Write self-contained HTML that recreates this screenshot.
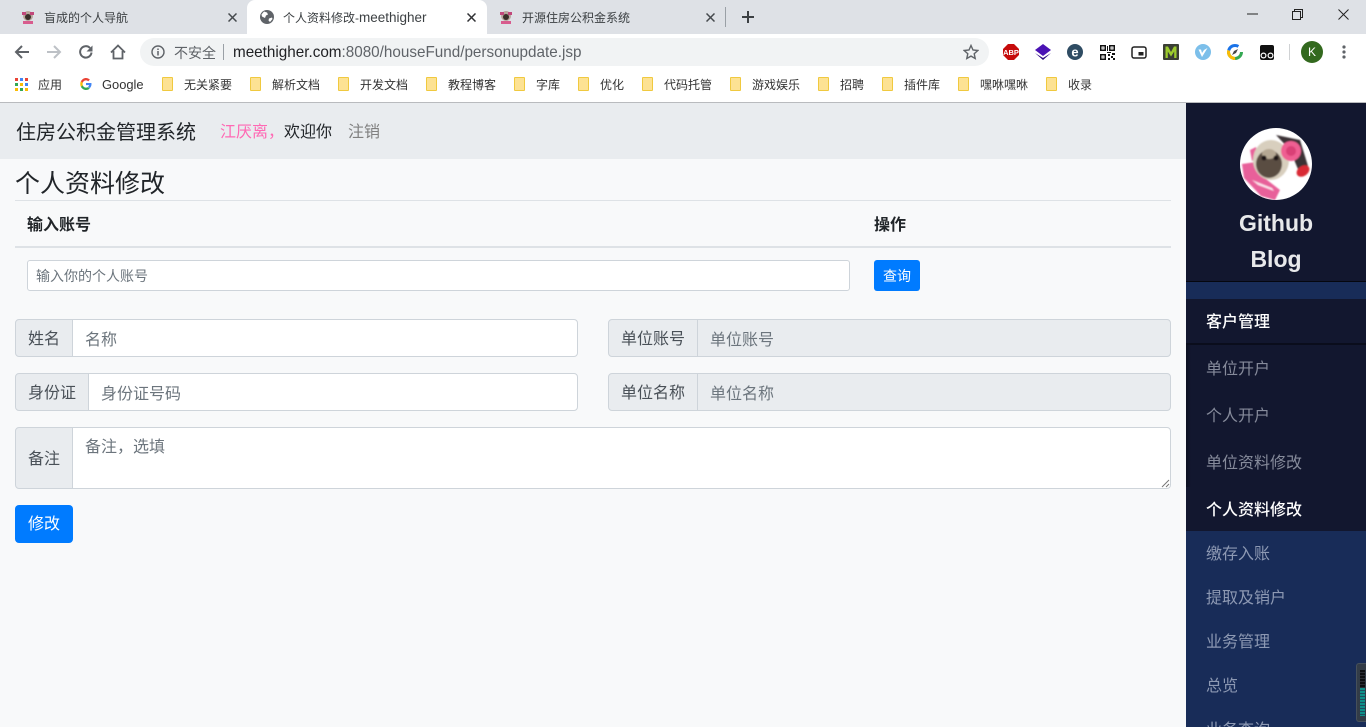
<!DOCTYPE html>
<html lang="zh"><head><meta charset="utf-8"><title>个人资料修改-meethigher</title>
<style>
*{box-sizing:border-box}
html,body{margin:0;padding:0;width:1366px;height:727px;overflow:hidden;background:#f8f9fa;font-family:"Liberation Sans","Noto Sans CJK SC",sans-serif}
#root{position:relative;width:1366px;height:727px;overflow:hidden}
.a{position:absolute}
.t{position:absolute;white-space:nowrap}
.tab{font-size:12px;line-height:18px;top:9px;color:#3c4043}
.bm{font-size:12px;line-height:16px;top:77px;color:#333}
.fo{position:absolute;top:77px;width:11px;height:14px;background:#fde293;border:1px solid #f0c93f;border-radius:1px}
.box{position:absolute;border:1px solid #ced4da;background:#fff;border-radius:4px}
.ad{position:absolute;background:#e9ecef;border:1px solid #ced4da;border-radius:4px 0 0 4px;color:#495057;font-size:16px;text-align:center}
.ph{position:absolute;color:#6c757d;font-size:16px;line-height:24px;white-space:nowrap}
.nav{position:absolute;left:1206px;font-size:16px;line-height:24px;white-space:nowrap}
</style></head><body><div id="root">

<!-- browser chrome -->
<div class="a" style="left:0;top:0;width:1366px;height:34px;background:#dee1e6"></div>
<div class="a" style="left:247px;top:0;width:240px;height:34px;background:#fff;border-radius:8px 8px 0 0"></div>
<div class="a" style="left:0;top:34px;width:1366px;height:69px;background:#fff"></div>
<div class="a" style="left:0;top:102px;width:1366px;height:1px;background:#b9bbbe"></div>

<svg class="a" style="left:20px;top:9px" width="16" height="16" viewBox="0 0 16 16"><circle cx="8" cy="7" r="5" fill="#b8a49a"/><path d="M2 3h4v3H2zM10 3h4v3h-4z" fill="#c2477b"/><circle cx="8" cy="8" r="3" fill="#3a2f2a"/><path d="M3 12h10v3H3z" fill="#d85c8e"/></svg>
<div class="t tab" style="left:44px">盲成的个人导航</div>
<svg class="a" style="left:228px;top:13px" width="9" height="9"><path d="M.5.5l8 8M8.500.5l-8 8" stroke="#45494d" stroke-width="1.500"/></svg>
<svg class="a" style="left:260px;top:10px" width="14" height="14" viewBox="0 0 14 14"><circle cx="7" cy="7" r="7" fill="#5f6368"/><path d="M4 1.500l3 1 1 2-2 1-1 2.500-3-1.500-.5-2zM9 8.500l3-1 .5 1.500-2.500 3-1.500-1.500z" fill="#fff"/></svg>
<div class="t tab" style="left:283px">个人资料修改-<span style="font-size:13.500px">meethigher</span></div>
<svg class="a" style="left:467px;top:13px" width="9" height="9"><path d="M.5.5l8 8M8.500.5l-8 8" stroke="#303134" stroke-width="1.500"/></svg>
<svg class="a" style="left:498px;top:9px" width="16" height="16" viewBox="0 0 16 16"><circle cx="8" cy="7" r="5" fill="#b8a49a"/><path d="M2 3h4v3H2zM10 3h4v3h-4z" fill="#c2477b"/><circle cx="8" cy="8" r="3" fill="#3a2f2a"/><path d="M3 12h10v3H3z" fill="#d85c8e"/></svg>
<div class="t tab" style="left:522px">开源住房公积金系统</div>
<svg class="a" style="left:706px;top:13px" width="9" height="9"><path d="M.5.5l8 8M8.500.5l-8 8" stroke="#45494d" stroke-width="1.500"/></svg>
<div class="a" style="left:725px;top:7px;width:1px;height:20px;background:#9aa0a6"></div>
<svg class="a" style="left:742px;top:11px" width="12" height="12"><path d="M6 0v12M0 6h12" stroke="#3c4043" stroke-width="2"/></svg>

<svg class="a" style="left:1247px;top:13px" width="11" height="2"><path d="M0 1h11" stroke="#222" stroke-width="1"/></svg>
<svg class="a" style="left:1292px;top:9px" width="11" height="11"><path d="M.5 2.500h8v8h-8zM2.500 2.500v-2h8v8h-2" fill="none" stroke="#222"/></svg>
<svg class="a" style="left:1338px;top:9px" width="11" height="11"><path d="M.5.5l10 10M10.500.5l-10 10" stroke="#222"/></svg>

<!-- toolbar -->
<svg class="a" style="left:14px;top:44px" width="16" height="16"><path d="M15 8H2M8 2L2 8l6 6" fill="none" stroke="#5f6368" stroke-width="2"/></svg>
<svg class="a" style="left:46px;top:44px" width="16" height="16"><path d="M1 8h13M8 2l6 6-6 6" fill="none" stroke="#bdc1c6" stroke-width="2"/></svg>
<svg class="a" style="left:78px;top:44px" width="16" height="16"><path d="M13.500 8.500A5.700 5.700 0 1 1 12 4" fill="none" stroke="#5f6368" stroke-width="2"/><path d="M14.500 1.500v6h-6z" fill="#5f6368"/></svg>
<svg class="a" style="left:110px;top:44px" width="16" height="16"><path d="M1 8.500L8 1.500l7 7M3.500 7v7.500h9V7" fill="none" stroke="#5f6368" stroke-width="1.800"/></svg>
<div class="a" style="left:140px;top:38px;width:849px;height:28px;border-radius:14px;background:#f1f3f4"></div>
<svg class="a" style="left:151px;top:45px" width="14" height="14"><circle cx="7" cy="7" r="6" fill="none" stroke="#5f6368" stroke-width="1.400"/><path d="M7 6v4.500M7 3.500v1.500" stroke="#5f6368" stroke-width="1.500"/></svg>
<div class="t" style="left:174px;top:44px;font-size:14px;line-height:18px;color:#5f6368">不安全</div>
<div class="a" style="left:223px;top:44px;width:1px;height:16px;background:#9aa0a6"></div>
<div class="t" style="left:233px;top:44px;font-size:15.250px;line-height:18px;color:#202124">meethigher.com<span style="color:#5f6368">:8080/houseFund/personupdate.jsp</span></div>
<svg class="a" style="left:963px;top:44px" width="16" height="16" viewBox="0 0 16 16"><path d="M8 1.500l2 4.500 4.800.5-3.600 3.200 1 4.800L8 12.100l-4.200 2.400 1-4.800L1.200 6.500 6 6z" fill="none" stroke="#5f6368" stroke-width="1.400"/></svg>

<!-- extensions -->
<svg class="a" style="left:1003px;top:44px" width="16" height="16"><path d="M5 0h6l5 5v6l-5 5H5l-5-5V5z" fill="#c60b0b"/><text x="8" y="11" font-size="7.500" font-weight="700" fill="#fff" text-anchor="middle" font-family="Liberation Sans">ABP</text></svg>
<svg class="a" style="left:1035px;top:44px" width="16" height="16"><path d="M8 0l8 6-8 6-8-6z" fill="#4a12b4"/><path d="M0 9l8 7 8-7-8 5z" fill="#2c0a80"/></svg>
<svg class="a" style="left:1067px;top:44px" width="16" height="16"><circle cx="8" cy="8" r="8" fill="#2f4c63"/><text x="8" y="12.500" font-size="13" font-weight="700" fill="#fff" text-anchor="middle" font-family="Liberation Sans">e</text></svg>
<svg class="a" style="left:1100px;top:45px" width="15" height="15"><path d="M0 0h6v6H0zM1.500 1.500v3h3v-3zM9 0h6v6H9zM10.500 1.500v3h3v-3zM0 9h6v6H0zM1.500 10.500v3h3v-3z" fill="#111" fill-rule="evenodd"/><path d="M2.500 2.500h1v1h-1zM11.500 2.500h1v1h-1zM2.500 11.500h1v1h-1zM7 1h1v5H7zM7 7h4v1H7zM12 8h3v2h-3zM8 9h2v2H8zM11 11h2v2h-2zM8 13h2v2H8zM13 13h2v2h-2z" fill="#111"/></svg>
<svg class="a" style="left:1131px;top:46px" width="16" height="13"><rect x="1" y="1" width="14" height="11" rx="2" fill="#fff" stroke="#222" stroke-width="1.500"/><rect x="7.500" y="6" width="5" height="3.500" fill="#222"/></svg>
<svg class="a" style="left:1163px;top:44px" width="16" height="16"><rect width="16" height="16" rx="1" fill="#3b3f35"/><path d="M2.500 14V2.500h2.500L8 8l3-5.500h2.500V14h-2.300V7.500L8 12.500 4.800 7.500V14z" fill="#9ccb2d"/></svg>
<svg class="a" style="left:1195px;top:44px" width="16" height="16"><circle cx="8" cy="8" r="8" fill="#7cbfea"/><path d="M3.500 5.500L7 13l5.500-9-3.500 2-2 3-1-3.500z" fill="#fff"/></svg>
<svg class="a" style="left:1227px;top:44px" width="16" height="16"><circle cx="8" cy="8" r="6.500" fill="#fff" stroke="#34a853" stroke-width="3" stroke-dasharray="20 21"/><circle cx="8" cy="8" r="6.500" fill="none" stroke="#fbbc05" stroke-width="3" stroke-dasharray="12 29" stroke-dashoffset="-10"/><circle cx="8" cy="8" r="6.500" fill="none" stroke="#1a73e8" stroke-width="3" stroke-dasharray="12 29" stroke-dashoffset="-22"/><path d="M5 11l2-4 4-2-2 4z" fill="#444"/></svg>
<svg class="a" style="left:1259px;top:45px" width="16" height="15"><path d="M3 0h10a2 2 0 0 1 2 2v11a2 2 0 0 1-2 2H3a2 2 0 0 1-2-2V2a2 2 0 0 1 2-2z" fill="#111"/><circle cx="4.500" cy="10.500" r="3" fill="#fff"/><circle cx="11.500" cy="10.500" r="3" fill="#fff"/><circle cx="4.500" cy="10.500" r="1.800" fill="#111"/><circle cx="11.500" cy="10.500" r="1.800" fill="#111"/></svg>
<div class="a" style="left:1289px;top:44px;width:1px;height:16px;background:#d0d2d4"></div>
<div class="a" style="left:1301px;top:41px;width:22px;height:22px;border-radius:50%;background:#33691e;color:#fff;font-size:12px;line-height:22px;text-align:center">K</div>
<svg class="a" style="left:1342px;top:45px" width="4" height="14"><circle cx="2" cy="2" r="1.600" fill="#5f6368"/><circle cx="2" cy="7" r="1.600" fill="#5f6368"/><circle cx="2" cy="12" r="1.600" fill="#5f6368"/></svg>

<!-- bookmarks -->
<svg class="a" style="left:15px;top:78px" width="13" height="13"><g><rect width="3" height="3" fill="#ea4335"/><rect x="5" width="3" height="3" fill="#4285f4"/><rect x="10" width="3" height="3" fill="#ea4335"/><rect y="5" width="3" height="3" fill="#34a853"/><rect x="5" y="5" width="3" height="3" fill="#fbbc05"/><rect x="10" y="5" width="3" height="3" fill="#4285f4"/><rect y="10" width="3" height="3" fill="#fbbc05"/><rect x="5" y="10" width="3" height="3" fill="#34a853"/><rect x="10" y="10" width="3" height="3" fill="#fbbc05"/></g></svg>
<div class="t bm" style="left:38px">应用</div>
<svg class="a" style="left:80px;top:78px" width="12" height="12" viewBox="0 0 24 24"><path d="M23 12.300c0-.9-.1-1.600-.2-2.300H12v4.300h6.200c-.3 1.400-1 2.500-2.300 3.300l3.600 2.800c2.100-2 3.500-4.800 3.500-8.100z" fill="#4285f4"/><path d="M12 24c3.200 0 5.900-1.100 7.500-3l-3.600-2.800c-1 .7-2.300 1.100-3.900 1.100-3 0-5.600-2-6.500-4.800l-3.800 2.900C4 21.300 7.700 24 12 24z" fill="#34a853"/><path d="M5.500 14.500c-.5-1.500-.5-3.500 0-5L1.700 6.600c-1.600 3.200-1.600 7.600 0 10.800z" fill="#fbbc05"/><path d="M12 4.700c1.800 0 3.300.6 4.500 1.800l3.200-3.200C17.800 1.300 15.100 0 12 0 7.700 0 4 2.700 1.700 6.600l3.800 2.900C6.400 6.700 9 4.700 12 4.700z" fill="#ea4335"/></svg>
<div class="t bm" style="left:102px;font-size:12.900px">Google</div>
<div class="fo" style="left:162px"></div><div class="t bm" style="left:184px">无关紧要</div>
<div class="fo" style="left:250px"></div><div class="t bm" style="left:272px">解析文档</div>
<div class="fo" style="left:338px"></div><div class="t bm" style="left:360px">开发文档</div>
<div class="fo" style="left:426px"></div><div class="t bm" style="left:448px">教程博客</div>
<div class="fo" style="left:514px"></div><div class="t bm" style="left:536px">字库</div>
<div class="fo" style="left:578px"></div><div class="t bm" style="left:600px">优化</div>
<div class="fo" style="left:642px"></div><div class="t bm" style="left:664px">代码托管</div>
<div class="fo" style="left:730px"></div><div class="t bm" style="left:752px">游戏娱乐</div>
<div class="fo" style="left:818px"></div><div class="t bm" style="left:840px">招聘</div>
<div class="fo" style="left:882px"></div><div class="t bm" style="left:904px">插件库</div>
<div class="fo" style="left:958px"></div><div class="t bm" style="left:980px">嘿咻嘿咻</div>
<div class="fo" style="left:1046px"></div><div class="t bm" style="left:1068px">收录</div>

<!-- page header -->
<div class="a" style="left:0;top:103px;width:1186px;height:56px;background:#e9ecef"></div>
<div class="t" style="left:16px;top:119px;font-size:20px;line-height:28px;color:#212529">住房公积金管理系统</div>
<div class="t" style="left:220px;top:121px;font-size:16px;line-height:24px;color:#ff69b4">江厌离&#65292;</div>
<div class="t" style="left:284px;top:121px;font-size:16px;line-height:24px;color:#212529">欢迎你</div>
<div class="t" style="left:348px;top:121px;font-size:16px;line-height:24px;color:#808080">注销</div>

<div class="t" style="left:15px;top:168px;font-size:25px;line-height:32px;color:#212529">个人资料修改</div>

<!-- table -->
<div class="a" style="left:15px;top:200px;width:1156px;height:1px;background:#dee2e6"></div>
<div class="t" style="left:27px;top:214px;font-size:16px;line-height:24px;font-weight:700;color:#212529">输入账号</div>
<div class="t" style="left:874px;top:214px;font-size:16px;line-height:24px;font-weight:700;color:#212529">操作</div>
<div class="a" style="left:15px;top:246px;width:1156px;height:2px;background:#dee2e6"></div>
<div class="box" style="left:27px;top:260px;width:823px;height:31px;border-radius:3px"></div>
<div class="ph" style="left:36px;top:265px;font-size:14px;line-height:23px">输入你的个人账号</div>
<div class="a" style="left:874px;top:260px;width:46px;height:31px;background:#007bff;border-radius:3px;color:#fff;font-size:14px;line-height:33px;text-align:center">查询</div>

<!-- form -->
<div class="ad" style="left:15px;top:319px;width:58px;height:38px;line-height:40px">姓名</div>
<div class="box" style="left:72px;top:319px;width:506px;height:38px;border-radius:0 4px 4px 0"></div>
<div class="ph" style="left:85px;top:330px;line-height:22px">名称</div>

<div class="ad" style="left:608px;top:319px;width:90px;height:38px;line-height:40px">单位账号</div>
<div class="box" style="left:697px;top:319px;width:474px;height:38px;border-radius:0 4px 4px 0;background:#e9ecef"></div>
<div class="ph" style="left:710px;top:330px;line-height:22px">单位账号</div>

<div class="ad" style="left:15px;top:373px;width:74px;height:38px;line-height:40px">身份证</div>
<div class="box" style="left:88px;top:373px;width:490px;height:38px;border-radius:0 4px 4px 0"></div>
<div class="ph" style="left:101px;top:384px;line-height:22px">身份证号码</div>

<div class="ad" style="left:608px;top:373px;width:90px;height:38px;line-height:40px">单位名称</div>
<div class="box" style="left:697px;top:373px;width:474px;height:38px;border-radius:0 4px 4px 0;background:#e9ecef"></div>
<div class="ph" style="left:710px;top:384px;line-height:22px">单位名称</div>

<div class="ad" style="left:15px;top:427px;width:58px;height:62px;line-height:64px">备注</div>
<div class="box" style="left:72px;top:427px;width:1099px;height:62px;border-radius:0 4px 4px 0"></div>
<div class="ph" style="left:85px;top:437px;line-height:22px">备注&#65292;选填</div>
<svg class="a" style="left:1161px;top:479px" width="9" height="9"><path d="M1 8l7-7M5 8l3-3" stroke="#777" stroke-width="1"/></svg>

<div class="a" style="left:15px;top:505px;width:58px;height:38px;background:#007bff;border-radius:4px;color:#fff;font-size:16px;line-height:40px;text-align:center">修改</div>

<!-- sidebar -->
<div class="a" style="left:1186px;top:103px;width:180px;height:624px;background:#182c58"></div>
<div class="a" style="left:1186px;top:103px;width:180px;height:179px;background:#12172f;border-bottom:1px solid #05070f"></div>
<div class="a" style="left:1186px;top:299px;width:180px;height:232px;background:#12172f"></div>
<div class="a" style="left:1186px;top:343px;width:180px;height:2px;background:#0a0d1c"></div>
<div class="a" style="left:1186px;top:345px;width:5px;height:142px;background:linear-gradient(90deg,#0b0f20,#12172f)"></div>

<svg class="a" style="left:1240px;top:128px" width="72" height="72" viewBox="0 0 72 72">
<defs><clipPath id="c"><circle cx="36" cy="36" r="36"/></clipPath><filter id="b" x="-5%" y="-5%" width="110%" height="110%"><feGaussianBlur stdDeviation="0.900"/></filter></defs>
<g clip-path="url(#c)"><rect width="72" height="72" fill="#fff"/>
<g filter="url(#b)">
<path d="M36 7l24 5 8 26-8 8-10-24z" fill="#3a3035"/>
<path d="M2 36l14-2 6 14 18 14-5 10-14-4L4 50z" fill="#e8609a"/>
<path d="M12 52l20 8 2 3-16-6z" fill="#fbe3ec"/>
<path d="M10 22l6-3 2 10-6 4zM14 40l10 10-8-2z" fill="#e8609a"/>
<ellipse cx="31" cy="32" rx="18" ry="20" fill="#d8cfbe"/>
<ellipse cx="29" cy="36" rx="13" ry="14" fill="#5a4d42"/>
<ellipse cx="29" cy="26" rx="7" ry="5" fill="#b5a893"/>
<circle cx="24" cy="30" r="2.500" fill="#1a1512"/><circle cx="36" cy="30" r="2.500" fill="#1a1512"/>
<circle cx="51" cy="23" r="10" fill="#ef5f92"/><circle cx="51" cy="23" r="5" fill="#d93f76"/>
<ellipse cx="63" cy="43" rx="7" ry="5" fill="#d92b35" transform="rotate(-35 63 43)"/>
</g></g></svg>
<div class="t" style="left:1186px;width:180px;text-align:center;top:205px;font-size:23px;line-height:36px;font-weight:700;color:#e8e9eb">Github</div>
<div class="t" style="left:1186px;width:180px;text-align:center;top:241px;font-size:23px;line-height:36px;font-weight:700;color:#e8e9eb">Blog</div>

<div class="nav" style="top:311px;color:#fff;font-weight:500">客户管理</div>
<div class="nav" style="top:358px;color:#868b9b">单位开户</div>
<div class="nav" style="top:405px;color:#868b9b">个人开户</div>
<div class="nav" style="top:452px;color:#868b9b">单位资料修改</div>
<div class="nav" style="top:499px;color:#fff;font-weight:500">个人资料修改</div>
<div class="nav" style="top:543px;color:#8d99b3">缴存入账</div>
<div class="nav" style="top:587px;color:#8d99b3">提取及销户</div>
<div class="nav" style="top:631px;color:#8d99b3">业务管理</div>
<div class="nav" style="top:675px;color:#8d99b3">总览</div>
<div class="nav" style="top:719px;color:#8d99b3">业务查询</div>

<!-- floating meter -->
<div class="a" style="left:1356px;top:663px;width:10px;height:59px;background:#333c47;border:1px solid #46505b;border-right:0;border-radius:3px 0 0 3px"></div>
<div class="a" style="left:1360px;top:670px;width:5px;height:18px;background:repeating-linear-gradient(#0d0f12 0 2px,#2a2d33 2px 3px)"></div>
<div class="a" style="left:1360px;top:688px;width:5px;height:28px;background:repeating-linear-gradient(#0e8f88 0 2px,#1d4e5f 2px 3px)"></div>
</div></body></html>
